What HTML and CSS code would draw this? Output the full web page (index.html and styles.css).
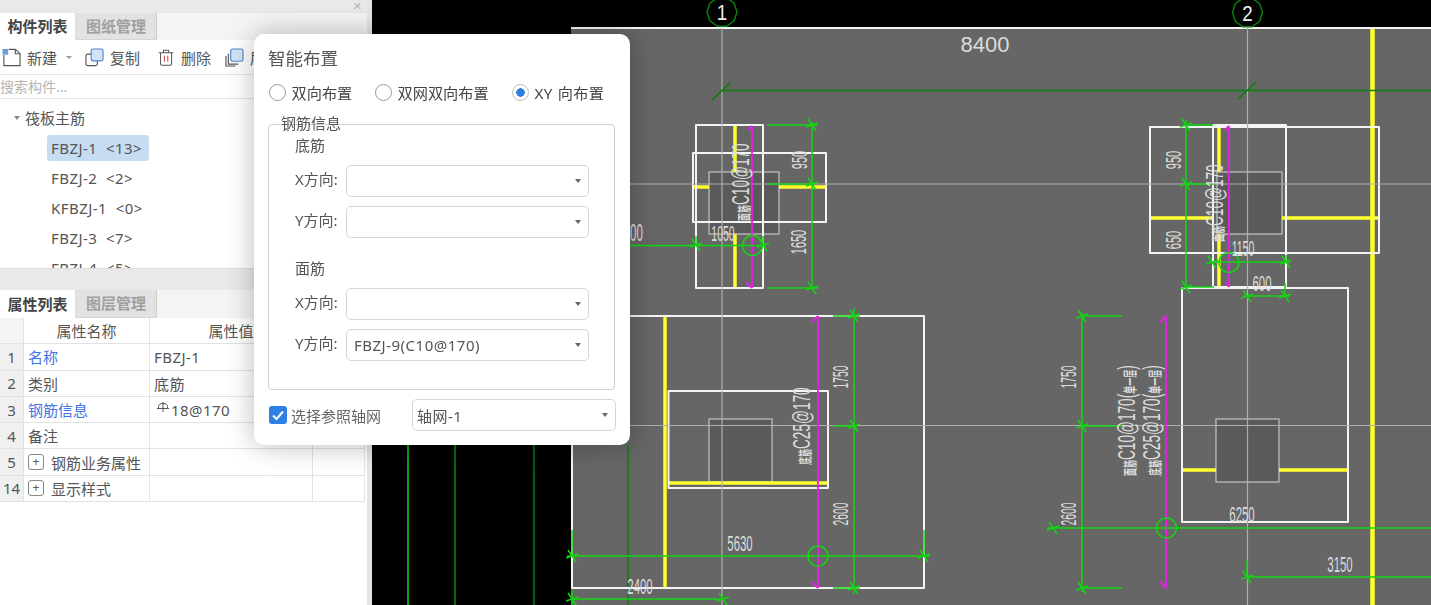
FILE: index.html
```html
<!DOCTYPE html>
<html lang="zh-CN">
<head>
<meta charset="utf-8">
<title>智能布置</title>
<link rel="stylesheet" href="styles.css">
</head>
<body>
<div class="app">
  <aside class="side">
    <div class="closebar"><span class="close">✕</span></div>
    <div class="tabs">
      <span class="tab active">构件列表</span>
      <span class="tab">图纸管理</span>
    </div>
    <div class="toolbar">
      <span class="tool tool-new">
        <svg class="ico" viewBox="0 0 20 20"><path class="ico-dark" d="M2 7V18.500H19V6L14 1.500H7"/><path class="ico-dark" d="M14 1.500V6H19"/><rect class="ico-dots" x="0.500" y="1" width="6" height="6"/></svg>
        新建<i class="caret caret-tool"></i>
      </span>
      <span class="tool tool-copy">
        <svg class="ico" viewBox="0 0 20 20"><rect class="ico-dark" x="1" y="6.500" width="12" height="12" rx="2"/><rect class="ico-blue" x="6.500" y="1" width="12.500" height="12.500" rx="2"/></svg>
        复制
      </span>
      <span class="tool tool-del">
        <svg class="ico ico-trash" viewBox="0 0 20 20"><path class="ico-dark" d="M1 4.500H18M6.500 4.500V1.500H12.500V4.500M3 4.500V17.500Q3 19 4.500 19H14.500Q16 19 16 17.500V4.500"/><path class="ico-red" d="M7.500 8V15M11.500 8V15"/></svg>
        删除
      </span>
      <span class="tool tool-layer">
        <svg class="ico" viewBox="0 0 20 20"><path class="ico-dark" d="M3.500 6V17H14M1 8.500V19H11"/><rect class="ico-blue" x="6" y="1" width="13" height="13" rx="2"/></svg>
        层间复制
      </span>
    </div>
    <div class="search">搜索构件...</div>
    <div class="tree">
      <div class="tree-row tree-root"><i class="caret caret-tree"></i>筏板主筋</div>
      <div class="tree-row tree-item"><span class="chip selected">FBZJ-1&nbsp; &lt;13&gt;</span></div>
      <div class="tree-row tree-item"><span class="chip">FBZJ-2&nbsp; &lt;2&gt;</span></div>
      <div class="tree-row tree-item"><span class="chip">KFBZJ-1&nbsp; &lt;0&gt;</span></div>
      <div class="tree-row tree-item"><span class="chip">FBZJ-3&nbsp; &lt;7&gt;</span></div>
      <div class="tree-row tree-item"><span class="chip">FBZJ-4&nbsp; &lt;5&gt;</span></div>
    </div>
    <div class="gutter"></div>
    <div class="tabs tabs-prop">
      <span class="tab active">属性列表</span>
      <span class="tab">图层管理</span>
    </div>
    <div class="grid">
      <div class="c head num"></div><div class="c head">属性名称</div><div class="c head">属性值</div><div class="c head"></div>
      <div class="c num">1</div><div class="c link">名称</div><div class="c val">FBZJ-1</div><div class="c"></div>
      <div class="c num">2</div><div class="c">类别</div><div class="c val">底筋</div><div class="c"></div>
      <div class="c num">3</div><div class="c link">钢筋信息</div><div class="c val"><svg class="rebar" viewBox="0 0 12 11"><path d="M1.500 6V4.500Q1.500 1.500 6 1.500Q10.500 1.500 10.500 4.500V6M0 6.500H12M6 0V10"/></svg>18@170</div><div class="c"></div>
      <div class="c num">4</div><div class="c">备注</div><div class="c val"></div><div class="c"></div>
      <div class="c num">5</div><div class="c"><i class="plus">+</i>钢筋业务属性</div><div class="c val"></div><div class="c"></div>
      <div class="c num">14</div><div class="c"><i class="plus">+</i>显示样式</div><div class="c val"></div><div class="c"></div>
    </div>
  </aside>

  <main class="canvas">
    <svg class="cad" viewBox="372 0 1059 605" width="1059" height="605">
      <defs>
        <polygon id="oct" points="15,0 12.100,8.800 4.600,14.300 -4.600,14.300 -12.100,8.800 -15,0 -12.100,-8.800 -4.600,-14.300 4.600,-14.300 12.100,-8.800"/>
        <path id="x" d="M-4 -6L4 6M-6 2L6 -2"/>
      </defs>
      <rect class="sheet" x="571" y="28" width="860" height="577"/>

      <!-- black field rebar lines -->
      <path class="g-bright" d="M408 445V605"/>
      <path class="g-mid" d="M455 445V605"/>
      <path class="g-dark" d="M534 445V605M628 445V605"/>

      <!-- column foundations -->
      <rect class="inner" x="709" y="172" width="70" height="62"/>
      <rect class="inner" x="1217" y="172" width="65" height="62"/>
      <rect class="inner" x="709" y="419" width="63" height="63"/>
      <rect class="inner" x="1216" y="419" width="63" height="63"/>

      <!-- rebar yellow -->
      <path class="yellow" d="M735 125V172M735 234V288M693 187H709M779 187H826"/>
      <path class="yellow" d="M1219 125V172M1219 234V287M1150 218H1213M1282 218H1379"/>
      <path class="yellow" d="M665 316V588M668 483H828"/>
      <path class="yellow" d="M1182 470H1216M1279 470H1348"/>
      <path class="yellow yellow-wide" d="M1372.500 28V605"/>

      <!-- outlines -->
      <path class="white" d="M571 28H1431"/>
      <rect class="white" x="696" y="125" width="67" height="163"/>
      <rect class="white" x="693" y="153" width="133" height="69"/>
      <rect class="white" x="1150" y="127" width="229" height="126"/>
      <rect class="white" x="1213" y="125" width="73" height="162"/>
      <rect class="white" x="1182" y="288" width="166" height="234"/>
      <rect class="white" x="572" y="316" width="352" height="272"/>
      <rect class="white" x="668.500" y="391" width="159.500" height="97"/>

      <!-- grid axes -->
      <path class="axis" d="M722 28V605M1247.500 28V605M630 184H1431M630 425.500H1431"/>
      <use class="g-dark" href="#oct" x="722" y="12"/>
      <use class="g-dark" href="#oct" x="1247.500" y="12.500"/>
      <path class="g-dark" d="M722 90.500H1431M712 100L731 82M1238 99L1256 82"/>

      <!-- magenta -->
      <path class="mag" d="M752 126V288M748 130L752 126M746 282L752 288"/>
      <path class="mag" d="M1229 126V287M1225 130L1229 126M1225 282L1229 287"/>
      <path class="mag" d="M818 316V588M812 322L818 316M812 582L818 588"/>
      <path class="mag" d="M1166 316V588M1160 322L1166 316M1160 582L1166 588"/>

      <!-- dimensions -->
      <path class="g-bright" d="M767 125H818M767 184H812M767 288H818M812 122V290M630 245.500H766M696 236V246M763 236V246"/>
      <path class="g-bright" d="M1186 120V290M1186 125H1213M1186 184H1214M1186 287H1214M1210 262H1290M1243 296H1290M1286 255V262M1285 283V296"/>
      <path class="g-bright" d="M833 316H860M833 426H858M833 588H860M854 308V594M567 556H930M572 530V556M924 530V556M572 599H723M572 590V605"/>
      <path class="g-bright" d="M1082 313V592M1082 316H1122M1082 426H1122M1082 588H1122M1047 528H1431M1247 577H1431M1247 560V577"/>
      <circle class="g-bright" cx="752.500" cy="245.500" r="10"/>
      <circle class="g-bright" cx="1229" cy="262.500" r="10"/>
      <circle class="g-bright" cx="818" cy="556" r="10"/>
      <circle class="g-bright" cx="1166.500" cy="528" r="10"/>
      <use class="g-bright" href="#x" x="812" y="125"/><use class="g-bright" href="#x" x="812" y="184"/><use class="g-bright" href="#x" x="812" y="288"/>
      <use class="g-bright" href="#x" x="696" y="245"/><use class="g-bright" href="#x" x="763" y="245"/>
      <use class="g-bright" href="#x" x="1186" y="125"/><use class="g-bright" href="#x" x="1186" y="184"/><use class="g-bright" href="#x" x="1186" y="287"/>
      <use class="g-bright" href="#x" x="1212" y="262"/><use class="g-bright" href="#x" x="1286" y="262"/>
      <use class="g-bright" href="#x" x="1247" y="296"/><use class="g-bright" href="#x" x="1285" y="296"/>
      <use class="g-bright" href="#x" x="854" y="316"/><use class="g-bright" href="#x" x="854" y="426"/><use class="g-bright" href="#x" x="854" y="588"/>
      <use class="g-bright" href="#x" x="572" y="556"/><use class="g-bright" href="#x" x="924" y="556"/>
      <use class="g-bright" href="#x" x="572" y="599"/><use class="g-bright" href="#x" x="723" y="599"/>
      <use class="g-bright" href="#x" x="1082" y="316"/><use class="g-bright" href="#x" x="1082" y="426"/><use class="g-bright" href="#x" x="1082" y="588"/>
      <use class="g-bright" href="#x" x="1053" y="528"/><use class="g-bright" href="#x" x="1247" y="577"/>

      <!-- CAD text -->
      <text class="t t-axis" transform="translate(722,20) scale(.85,1)">1</text>
      <text class="t t-axis" transform="translate(1247.500,21) scale(.85,1)">2</text>
      <text class="t" transform="translate(985,52)">8400</text>
      <text class="t" transform="translate(807,160) rotate(-90) scale(.5,1)">950</text>
      <text class="t" transform="translate(806,242) rotate(-90) scale(.5,1)">1650</text>
      <text class="t" transform="translate(723,241) scale(.48,1)">1050</text>
      <text class="t tl" transform="translate(630,241) scale(.48,1)">00</text>
      <text class="t" transform="translate(1181,160) rotate(-90) scale(.5,1)">950</text>
      <text class="t" transform="translate(1181,240) rotate(-90) scale(.5,1)">650</text>
      <text class="t" transform="translate(1243,256) scale(.48,1)">1150</text>
      <text class="t" transform="translate(1262,291) scale(.52,1)">600</text>
      <text class="t" transform="translate(848,377) rotate(-90) scale(.47,1)">1750</text>
      <text class="t" transform="translate(848,514) rotate(-90) scale(.47,1)">2600</text>
      <text class="t" transform="translate(740,551) scale(.52,1)">5630</text>
      <text class="t" transform="translate(640,594) scale(.52,1)">2400</text>
      <text class="t" transform="translate(1076,377) rotate(-90) scale(.47,1)">1750</text>
      <text class="t" transform="translate(1076,514) rotate(-90) scale(.47,1)">2600</text>
      <text class="t" transform="translate(1242,522) scale(.52,1)">6250</text>
      <text class="t" transform="translate(1340,572) scale(.52,1)">3150</text>

      <text class="t tl" transform="translate(749,221) rotate(-90) scale(.57,1)"><tspan class="t-cjk">面筋</tspan>C10@170</text>
      <text class="t tl" transform="translate(1223,242) rotate(-90) scale(.57,1)"><tspan class="t-cjk">面筋</tspan>C10@170</text>
      <text class="t tl" transform="translate(810,465) rotate(-90) scale(.57,1)"><tspan class="t-cjk">底筋</tspan>C25@170</text>
      <text class="t tl" transform="translate(1135,476) rotate(-90) scale(.57,1)"><tspan class="t-cjk">面筋</tspan>C10@170(<tspan class="t-cjk">单一层</tspan>)</text>
      <text class="t tl" transform="translate(1160,476) rotate(-90) scale(.57,1)"><tspan class="t-cjk">底筋</tspan>C25@170(<tspan class="t-cjk">单一层</tspan>)</text>
    </svg>
  </main>

  <section class="dialog">
    <div class="title">智能布置</div>
    <div class="radios">
      <label class="radio r1"><i class="dot"></i>双向布置</label>
      <label class="radio r2"><i class="dot"></i>双网双向布置</label>
      <label class="radio r3"><i class="dot on"></i>XY 向布置</label>
    </div>
    <div class="info">
      <span class="legend">钢筋信息</span>
      <div class="sub">底筋</div>
      <div class="field"><span class="lbl">X方向:</span><span class="select"><i class="caret"></i></span></div>
      <div class="field"><span class="lbl">Y方向:</span><span class="select"><i class="caret"></i></span></div>
      <div class="sub sub-top">面筋</div>
      <div class="field"><span class="lbl">X方向:</span><span class="select"><i class="caret"></i></span></div>
      <div class="field"><span class="lbl">Y方向:</span><span class="select"><span class="sel-text">FBZJ-9(C10@170)</span><i class="caret"></i></span></div>
    </div>
    <div class="foot">
      <label class="check"><i class="box"><svg viewBox="0 0 18 18"><path d="M4 9.500L7.500 13L14 5.500"/></svg></i>选择参照轴网</label>
      <span class="select select-axis"><span class="sel-text">轴网-1</span><i class="caret"></i></span>
    </div>
  </section>
</div>
</body>
</html>
```
FILE: styles.css
```css
* { box-sizing: border-box; }
html, body { margin: 0; height: 100%; overflow: hidden; }
body {
  font-family: "Noto Sans", "Noto Sans CJK SC", sans-serif;
  font-size: 15px;
  color: #444;
  background: #000;
}
i { font-style: normal; }

.app { position: relative; display: flex; width: 1431px; height: 605px; filter: blur(0.45px); }

/* side panel */
.side { width: 372px; flex: none; height: 605px; background: #fff; border-right: 5px solid #e6e6e6; display: flex; flex-direction: column; overflow: hidden; }
.closebar { height: 13px; background: #e9e9e9; display: flex; justify-content: flex-end; align-items: center; padding-right: 5px; }
.close { font-size: 11px; line-height: 11px; color: #b5b5b5; font-family: "DejaVu Sans", sans-serif; }
.tabs { height: 27px; flex: none; display: flex; background: #f4f4f4; }
.tab { width: 81px; display: flex; align-items: center; justify-content: center; font-size: 15px; font-weight: 700; color: #a0a0a0; background: #e2e2e2; border-right: 1px solid #ccc; border-bottom: 1px solid #d6d6d6; line-height: 1; }
.tab.active { width: 76px; color: #444; background: #fff; border-bottom: 0; border-right: 1px solid #ddd; }

.toolbar { height: 35px; flex: none; display: flex; align-items: center; border-bottom: 1px solid #e6e6e6; white-space: nowrap; overflow: hidden; }
.tool { display: flex; align-items: center; font-size: 15px; color: #555; gap: 6px; flex: none; }
.tool-new { width: 85px; padding-left: 2px; }
.tool-copy { width: 71px; }
.tool-del { width: 69px; padding-left: 2px; }
.ico { width: 19px; height: 19px; flex: none; }
.ico-trash { width: 17px; height: 19px; }
.ico path, .ico rect { fill: none; stroke-width: 1.200; }
.ico .ico-dark { stroke: #555; fill: #fff; }
.ico path.ico-dark { fill: none; }
.ico .ico-blue { stroke: #4f86cf; fill: #d4e4f8; }
.ico .ico-red { stroke: #d6433a; }
.ico .ico-dots { fill: #6d9de0; stroke: none; }
.caret { display: block; width: 0; height: 0; margin-left: auto; border: 3.500px solid transparent; border-top: 4px solid #666; border-bottom: 0; flex: none; }
.caret-tool { border-top-color: #999; margin-left: 3px; border-width: 3px 3px 0; }

.search { height: 24px; flex: none; border-bottom: 1px solid #e4e4e4; font-size: 14px; line-height: 23px; color: #b4b4b4; white-space: nowrap; }

.tree { height: 170px; flex: none; overflow: hidden; padding-top: 3.500px; border-bottom: 1px solid #dcdcdc; }
.tree-row { height: 30px; display: flex; align-items: center; }
.tree-root { padding-left: 14px; font-size: 15px; color: #555; gap: 5px; }
.caret-tree { margin-left: 0; border-width: 4px 3.500px 0; border-top-color: #888; }
.tree-item { padding-left: 47px; }
.chip { height: 26px; padding: 0 7px 0 4px; display: flex; align-items: center; border-radius: 3px; font-size: 15px; letter-spacing: .45px; color: #555; white-space: nowrap; }
.chip.selected { background: #c6dcf3; width: 102px; }

.gutter { height: 21px; flex: none; background: #e9e9e9; }
.tabs-prop { background: #f4f4f4; height: 28px; }

.grid { display: grid; grid-template-columns: 24px 126px 163px 52px; grid-auto-rows: 26.300px; align-content: start; width: 365px; }
.c { border-right: 1px solid #e2e2e2; border-bottom: 1px solid #e2e2e2; display: flex; align-items: center; padding-left: 4px; font-size: 15px; color: #555; white-space: nowrap; overflow: hidden; }
.head { justify-content: center; padding-left: 0; }
.num { background: #f0f0f0; justify-content: center; padding-left: 0; color: #555; font-size: 15px; }
.head.num { background: #f4f4f4; }
.link { color: #3f74e6; }
.val { letter-spacing: .45px; }
.rebar { width: 12px; height: 11px; margin: 0 2px 5px 3px; flex: none; }
.rebar path { fill: none; stroke: #555; stroke-width: 1; }
.plus { width: 16px; height: 16px; border: 1px solid #888; border-radius: 3px; display: flex; align-items: center; justify-content: center; font-size: 12px; line-height: 1; margin-right: 7px; flex: none; }

/* CAD canvas */
.canvas { flex: 1; min-width: 0; background: #000; overflow: hidden; }
.cad { display: block; }
.cad path, .cad rect, .cad circle, .cad polygon, .cad use { fill: none; }
.sheet { fill: #666 !important; }
.inner { fill: #5a5a5a !important; stroke: #c4c4c4; stroke-width: 1.200; }
.white { stroke: #f4f4f4; stroke-width: 2; stroke-linejoin: round; }
.axis { stroke: #aeaeae; stroke-width: 1.200; }
.yellow { stroke: #ffff2e; stroke-width: 3.500; }
.yellow-wide { stroke-width: 4.500; }
.mag { stroke: #e81fe8; stroke-width: 1.800; }
.g-bright { stroke: #12d612; stroke-width: 1.500; }
.g-mid { stroke: #0fb00f; stroke-width: 1.200; }
.g-dark { stroke: #0a7f0a; stroke-width: 1.500; }
.t { font-family: "Liberation Sans", sans-serif; font-size: 22px; fill: #dcdcdc; text-anchor: middle; }
.tl { text-anchor: start; font-size: 24px; }
.t-cjk { font-family: "Noto Sans CJK SC", sans-serif; font-size: 14px; font-weight: 700; }
.t-axis { font-size: 22px; fill: #eee; }

/* dialog */
.dialog { position: absolute; left: 254px; top: 34px; width: 376px; height: 411px; background: #fff; border-radius: 10px; box-shadow: 0 0 28px rgba(0,0,0,.28); padding: 13px 15px 0 14px; }
.title { font-size: 17.500px; line-height: 22px; color: #555; }
.radios { display: flex; margin-top: 12px; height: 22px; padding-left: 1px; }
.radio { display: flex; align-items: center; font-size: 15.200px; color: #444; white-space: nowrap; }
.r1 { width: 106px; }
.r2 { width: 137px; }
.r3 { word-spacing: 1px; letter-spacing: .3px; }
.dot { width: 17px; height: 17px; border: 1px solid #999; border-radius: 50%; margin-right: 5.500px; flex: none; background: #fff; }
.dot.on { border-color: #bbb; background: radial-gradient(circle, #2b7de0 0 4px, #fff 4.500px); }
.info { margin-top: 21px; width: 347px; height: 266px; border: 1px solid #cfcfcf; border-radius: 4px; padding: 10px 25px 0 26px; position: relative; }
.legend { position: absolute; left: 12px; top: -12px; font-size: 15px; line-height: 20px; color: #555; }
.sub { font-size: 15px; line-height: 20px; color: #555; height: 20px; }
.sub-top { margin-top: 20px; }
.field { display: flex; align-items: center; height: 32px; margin-top: 9px; }
.sub + .field { margin-top: 10px; }
.lbl { width: 51px; flex: none; font-size: 15px; color: #555; white-space: nowrap; margin-bottom: 5px; }
.select { flex: 1; height: 100%; border: 1px solid #d6d6d6; border-radius: 5px; display: flex; align-items: center; padding: 0 7px 0 7px; font-size: 15px; color: #555; background: #fff; }
.sel-text { letter-spacing: .5px; white-space: nowrap; }
.foot { display: flex; align-items: center; height: 32px; margin-top: 9px; padding-left: 1px; }
.check { display: flex; align-items: center; width: 143px; flex: none; font-size: 15px; color: #666; white-space: nowrap; gap: 4px; }
.box { width: 18px; height: 18px; background: #2f80e4; border-radius: 3px; display: block; flex: none; }
.box svg { display: block; width: 18px; height: 18px; }
.box path { fill: none; stroke: #fff; stroke-width: 2; }
.select-axis { flex: none; width: 204px; height: 32px; padding-left: 4px; }
```
